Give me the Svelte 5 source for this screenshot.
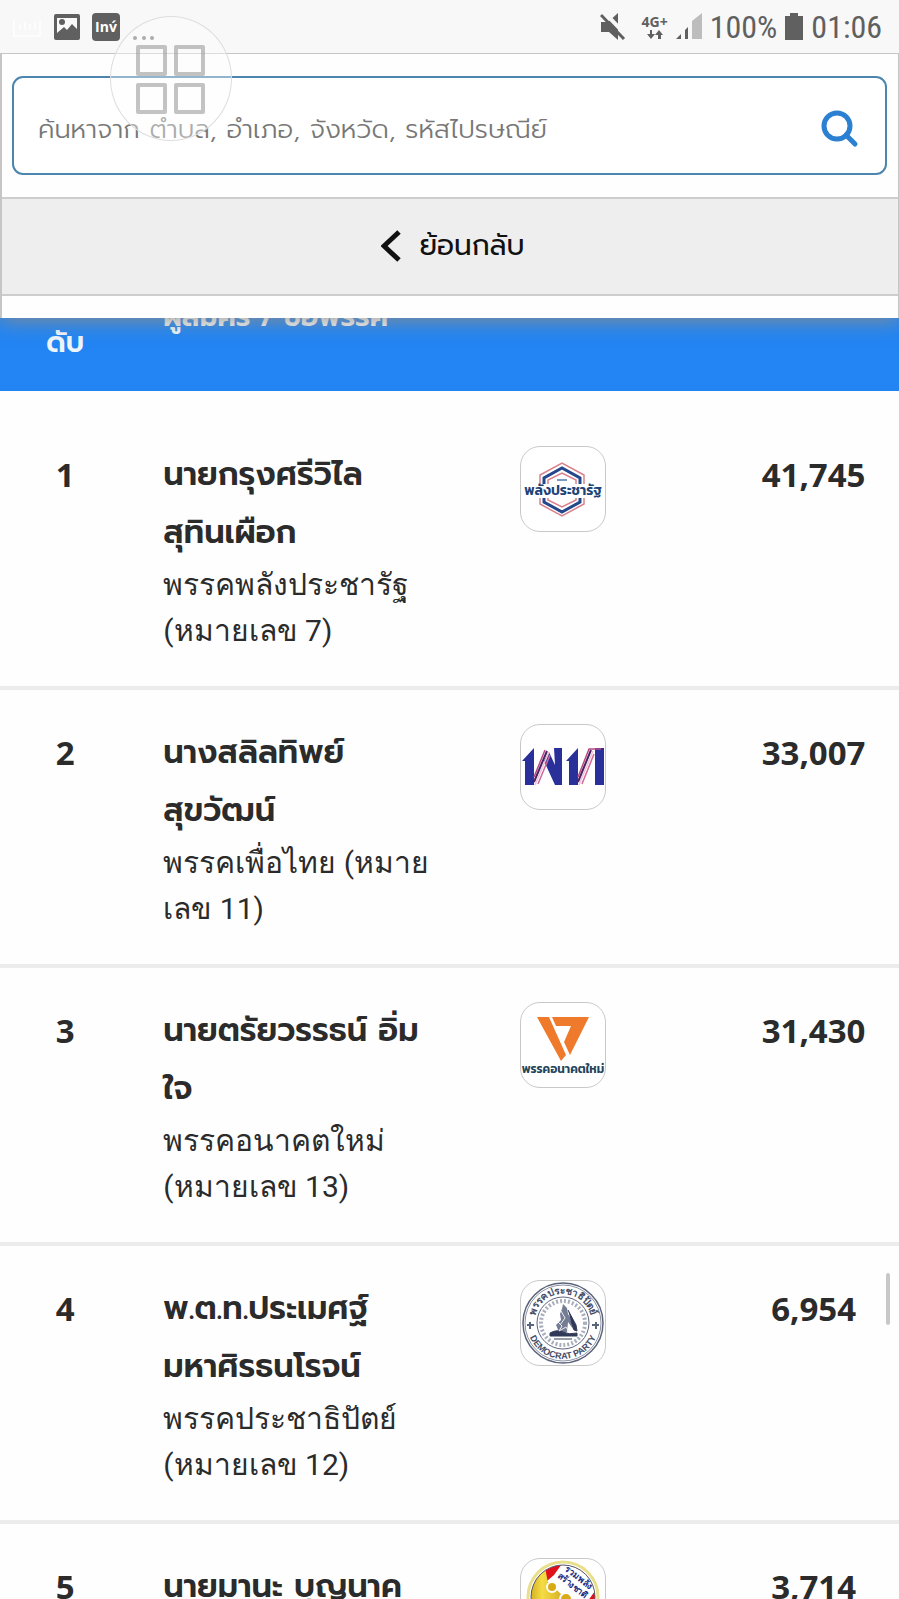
<script>
  const rows = [
    { rank: 1, name: ['นายกรุงศรีวิไล', 'สุทินเผือก'], party: ['พรรคพลังประชารัฐ', '(หมายเลข 7)'], votes: '41,745', logo: 'ppp' },
    { rank: 2, name: ['นางสลิลทิพย์', 'สุขวัฒน์'], party: ['พรรคเพื่อไทย (หมาย', 'เลข 11)'], votes: '33,007', logo: 'pt' },
    { rank: 3, name: ['นายตรัยวรรธน์ อิ่ม', 'ใจ'], party: ['พรรคอนาคตใหม่', '(หมายเลข 13)'], votes: '31,430', logo: 'fwp' },
    { rank: 4, name: ['พ.ต.ท.ประเมศฐ์', 'มหาศิรธนโรจน์'], party: ['พรรคประชาธิปัตย์', '(หมายเลข 12)'], votes: '6,954', logo: 'dem' },
    { rank: 5, name: ['นายมานะ บุญนาค'], party: [], votes: '3,714', logo: 'coin' }
  ];
  let query = $state('');
</script>

<div class="screen">
  <header class="status">
    <div class="notes">
      <svg width="30" height="24" viewBox="0 0 30 24" aria-hidden="true"><path d="M2 5v16h26V5M8 15V9m5 6V7m5 8V9m5 6V7" fill="none" stroke="#fdfdfd" stroke-width="2" /></svg>
      <svg width="26" height="26" viewBox="0 0 26 26" aria-hidden="true">
        <rect width="26" height="26" rx="2" fill="#606060" />
        <path d="M3 4h20v11l-5-5-5 6-3-3-7 6z" fill="#fafafa" />
        <circle cx="8" cy="8" r="3" fill="#606060" />
      </svg>
      <span class="chip">Inv́</span>
      <svg class="dots" width="24" height="6" viewBox="0 0 24 6" aria-hidden="true"><g fill="#777"><circle cx="3" cy="3" r="2" /><circle cx="12" cy="3" r="2" /><circle cx="20" cy="3" r="2" /></g></svg>
    </div>
    <div class="system">
      <svg width="26" height="28" viewBox="0 0 26 28" aria-hidden="true">
        <path d="M1 9h7l10-9v27l-9-8H1z" fill="#606060" />
        <path d="M3 -2l24 25" stroke="#f8f8f8" stroke-width="4" />
        <path d="M1 2l23 24" stroke="#606060" stroke-width="3" />
      </svg>
      <span class="net">
        <span>4G+</span>
        <svg width="16" height="9" viewBox="0 0 16 9" aria-hidden="true"><path d="M3 0h2v4h3L4 9 0 4h3zM11 9h3V5h2l-4-5-4 5h3z" fill="#606060" /></svg>
      </span>
      <svg class="signal" width="26" height="27" viewBox="0 0 26 27" aria-hidden="true"><path d="M0 26l5-5v5zM9 17l3-3v12H9z" fill="#606060" /><path d="M16 8L26 0v26H16z" fill="#bdbdbd" /></svg>
      <span class="big">100%</span>
      <svg class="battery" width="18" height="27" viewBox="0 0 18 27" aria-hidden="true"><path d="M5 0h8v3h5v24H0V3h5z" fill="#606060" /></svg>
      <span class="big">01:06</span>
    </div>
  </header>

  <section class="top">
    <form class="search" onsubmit={(e) => e.preventDefault()}>
      <input bind:value={query} type="text" aria-label="ค้นหาจาก ตำบล, อำเภอ, จังหวัด, รหัสไปรษณีย์" placeholder="ค้นหาจาก ตำบล, อำเภอ, จังหวัด, รหัสไปรษณีย์" />
      <button type="submit" aria-label="ค้นหา">
        <svg width="38" height="38" viewBox="0 0 38 38" aria-hidden="true"><circle cx="16" cy="16" r="13" fill="none" stroke="#2b80d2" stroke-width="5" /><path d="M25 25l9 9" stroke="#2b80d2" stroke-width="5" stroke-linecap="round" /></svg>
      </button>
    </form>
    <button class="back" type="button">
      <svg width="20" height="32" viewBox="0 0 20 32" aria-hidden="true"><path d="M18 2L3 16l15 14" fill="none" stroke="#111" stroke-width="5" /></svg>
      <span>ย้อนกลับ</span>
    </button>
  </section>

  <table>
    <colgroup><col class="c1" /><col class="c2" /><col class="c3" /><col class="c4" /></colgroup>
    <thead>
      <tr><th>ลำ<br />ดับ</th><th class="who">ผู้สมัคร / ชื่อพรรค</th><th></th><th></th></tr>
    </thead>
    <tbody>
      {#each rows as row}
        <tr>
          <td class="num">{row.rank}</td>
          <td class="who">
            <div class="name">{#each row.name as part, i}{#if i}<br />{/if}{part}{/each}</div>
            <div class="party">{#each row.party as part, i}{#if i}<br />{/if}{part}{/each}</div>
          </td>
          <td class="pic">
            <div class="logo">
              {#if row.logo === 'ppp'}
                <svg viewBox="0 0 84 84" aria-hidden="true">
                  <g fill="none" stroke-width="1.5">
                    <path d="M19 37V28L41 16 63 28V37M19 51v6l22 12 22-12v-6" stroke="#d9808c" />
                    <path d="M23 37V31L41 21 59 31V37M23 51v4l18 10 18-10v-4" stroke="#24488b" stroke-width="3" />
                    <path d="M27 37V33L41 26 55 33V37M27 51v2l14 7 14-7v-2" stroke="#d9808c" />
                  </g>
                  <path d="M36 33h10" stroke="#7b9bc0" stroke-width="2" />
                  <rect x="2" y="38" width="80" height="12" fill="#fff" />
                  <text x="42" y="48" text-anchor="middle" font-size="14" font-weight="600" fill="#1d4376">พลังประชารัฐ</text>
                </svg>
              {:else if row.logo === 'pt'}
                <svg viewBox="0 0 84 84" aria-hidden="true">
                  <path d="M1 36L13 23v37H4V36zM33 23h8v37h-7L23 36l5-9 6 13zM45 36l12-13v37h-9V36zM74 23h9v37h-9z" fill="#29309a" />
                  <g fill="none">
                    <path d="M13 52L24 25M57 52L68 24H80" stroke="#b94a86" stroke-width="1.5" />
                    <path d="M13 57L26 26M57 57L70 25" stroke="#4a2462" stroke-width="2" />
                    <path d="M14 60L28 27M58 60L72 26" stroke="#f0c3d8" stroke-width="1.5" />
                    <path d="M17 59L29 30M61 59L73 29" stroke="#d06a9a" stroke-width="1.5" />
                  </g>
                </svg>
              {:else if row.logo === 'fwp'}
                <svg viewBox="0 0 84 84" aria-hidden="true">
                  <path d="M16 14h12l17 38-5 6zM31 14h37L49 52l-6-13 7-16H35z" fill="#f07a2c" />
                  <text x="42" y="70" text-anchor="middle" font-size="12" font-weight="600" fill="#22445a">พรรคอนาคตใหม่</text>
                </svg>
              {:else if row.logo === 'dem'}
                <svg viewBox="0 0 84 84" aria-hidden="true">
                  <defs><path id="arc-top" d="M13 42a29 29 0 0 1 58 0" /><path id="arc-bottom" d="M6 42a36 36 0 0 0 72 0" /></defs>
                  <g fill="none" stroke="#5c647c"><circle cx="42" cy="42" r="40" stroke-width="1.5" /><circle cx="42" cy="42" r="38" stroke-width=".7" /><circle cx="42" cy="42" r="26" /><circle cx="42" cy="42" r="22" stroke="#a9aebd" stroke-width="4" stroke-dasharray="2 2" /></g>
                  <path d="M42 23l4 4 1 6 4 6 1 9-5-7-1 10H38l-3-7 5-5-1-6 2-5z" fill="#747c94" />
                  <path d="M47 29l8 15 1 6-3-1-3-9M29 52q7-4 13-1t14 1v3H29zM33 58h18" fill="#303a58" stroke="#303a58" />
                  <path d="M36 40l5 5-3 5 7-4 3 5M40 30l4 7-5 7" fill="none" stroke="#eceef3" />
                  <path d="M9 41v7M6 44h7M75 41v7M71 44h7" stroke="#5c647c" stroke-width="2" />
                  <text class="looped" font-size="10" font-weight="700" fill="#454d67" text-anchor="middle"><textPath href="#arc-top" startOffset="50%">พรรคประชาธิปัตย์</textPath></text>
                  <text class="latin" font-size="9" font-weight="600" fill="#454d67" text-anchor="middle"><textPath href="#arc-bottom" startOffset="50%">DEMOCRAT PARTY</textPath></text>
                </svg>
              {:else}
                <svg viewBox="0 0 84 84" aria-hidden="true">
                  <defs>
                    <linearGradient id="gold"><stop offset="0" stop-color="#b68a00" /><stop offset=".35" stop-color="#f5dc45" /><stop offset="1" stop-color="#b88a05" /></linearGradient>
                    <clipPath id="disc"><circle cx="42" cy="38" r="32" /></clipPath>
                  </defs>
                  <circle cx="42" cy="38" r="35" fill="#fff" stroke="#e9df8b" stroke-width="3" />
                  <g clip-path="url(#disc)">
                    <path d="M0 0h84v84H0z" fill="#e0101c" />
                    <path d="M0 0L24 8 27 24 42 30 60 50 10 90z" fill="url(#gold)" />
                    <path d="M43 2L84 18 64 46 52 46 26 22 33 16z" fill="#fff" />
                    <circle cx="31" cy="28" r="5" fill="#d7aa18" stroke="#fff" stroke-width="2" />
                    <circle cx="45" cy="40" r="6" fill="#d7aa18" stroke="#fff" stroke-width="2" />
                    <g class="looped" transform="rotate(38 54 22)" font-size="9" font-weight="700" fill="#263083" text-anchor="middle"><text x="55" y="20">รวมพลัง</text><text x="55" y="30">สร้างชาติ</text></g>
                  </g>
                  <circle cx="42" cy="38" r="32" fill="none" stroke="#555c72" stroke-width="1" />
                </svg>
              {/if}
            </div>
          </td>
          <td class="num">{row.votes}</td>
        </tr>
      {/each}
    </tbody>
  </table>

  <button class="float" type="button" aria-label="เมนู"><i></i><i></i><i></i><i></i></button>
  <div class="thumb"></div>
</div>

<style>
  :global(body) { margin: 0; background: #fefefe; }
  .screen { position: relative; height: 100vh; overflow: hidden; font-family: Prompt, Kanit, 'Noto Sans Thai', sans-serif; color: #2b2b2b; }
  * { box-sizing: border-box; }
  svg { display: block; flex: none; }
  .status { height: 53px; padding: 0 17px 0 12px; display: flex; align-items: center; justify-content: space-between; background: #f8f8f8; color: #606060; }
  .notes, .system { display: flex; align-items: center; }
  .notes { gap: 12px; }
  .chip { width: 28px; height: 28px; border-radius: 4px; background: #606060; color: #fff; font: 700 14px/28px 'Open Sans', sans-serif; text-align: center; }
  .dots { align-self: flex-end; }
  .system { gap: 8px; }
  .net { display: flex; flex-direction: column; align-items: center; margin-left: 8px; font: 700 14px/16px 'Noto Sans', sans-serif; }
  .big { font: 400 32px/40px 'Roboto Condensed', 'Liberation Sans Narrow', Roboto, sans-serif; }
  .top { position: relative; z-index: 1; padding: 22px 0; background: #fefefe; border: 1px solid #c6c6c6; border-width: 1px 1px 0 2px; box-shadow: 0 2px 20px rgba(150, 140, 130, .9); clip-path: inset(0 0 -40px 0); }
  .search { display: flex; align-items: center; height: 99px; margin: 0 11px 22px 10px; padding: 0 24px; border: 2px solid #4c86ae; border-radius: 11px; background: #fefffe; }
  .search input { flex: 1; min-width: 0; border: 0; outline: 0; padding: 8px 0 0; background: none; font: inherit; font-size: 26px; line-height: 48px; font-weight: 300; color: #333; }
  .search input::placeholder { color: #777; opacity: 1; }
  .search button { border: 0; padding: 7px 2px 0 0; background: none; }
  .back { display: flex; align-items: center; justify-content: center; gap: 18px; width: 100%; height: 99px; border: 2px solid #cdcdcd; border-width: 2px 0; padding: 0 0 2px 6px; background: #eee; color: #111; font: inherit; font-size: 28px; }
  table { width: 100%; margin-top: -73px; border-collapse: separate; border-spacing: 0; table-layout: fixed; }
  .c1 { width: 14.5%; } .c2 { width: 36.7%; } .c3 { width: 29.8%; } .c4 { width: 19%; }
  th { padding: 20px 0 22px; background: #2285f3; color: #eef6fb; font-size: 28px; line-height: 52px; font-weight: 600; }
  td { padding: 34px 0 32px; border-bottom: 4px solid #ececec; vertical-align: top; }
  tbody tr:first-child td { padding-top: 55px; }
  .num { font: 700 33px/58px 'Noto Sans', sans-serif; text-align: center; }
  .who { padding-left: 33px; text-align: left; white-space: nowrap; }
  .name { font-size: 32px; line-height: 58px; font-weight: 600; }
  .party { font-family: Roboto, sans-serif; font-size: 30px; line-height: 46px; }
  .pic { padding-left: 60px; }
  .logo { width: 86px; height: 86px; overflow: hidden; border: 1px solid #c9c9c9; border-radius: 20px; background: #fff; }
  .logo text { font-family: Kanit, 'Noto Sans Thai', sans-serif; }
  .logo text.looped, .logo .looped text { font-family: Roboto, sans-serif; }
  .logo text.latin { font-family: 'Liberation Sans', Arial, sans-serif; }
  .float { position: absolute; z-index: 3; left: 110px; top: 16px; width: 122px; height: 125px; padding: 28px 25px; display: grid; grid-template-columns: 31px 31px; grid-auto-rows: 31px; gap: 7px; border: 1px solid #dedede; border-radius: 50%; background: rgba(252, 252, 252, .4); }
  .float i { border: 4px solid rgba(145, 145, 145, .55); border-radius: 2px; }
  .thumb { position: absolute; right: 9px; top: 1273px; width: 4px; height: 52px; border-radius: 2px; background: #c8c8c8; }
</style>
